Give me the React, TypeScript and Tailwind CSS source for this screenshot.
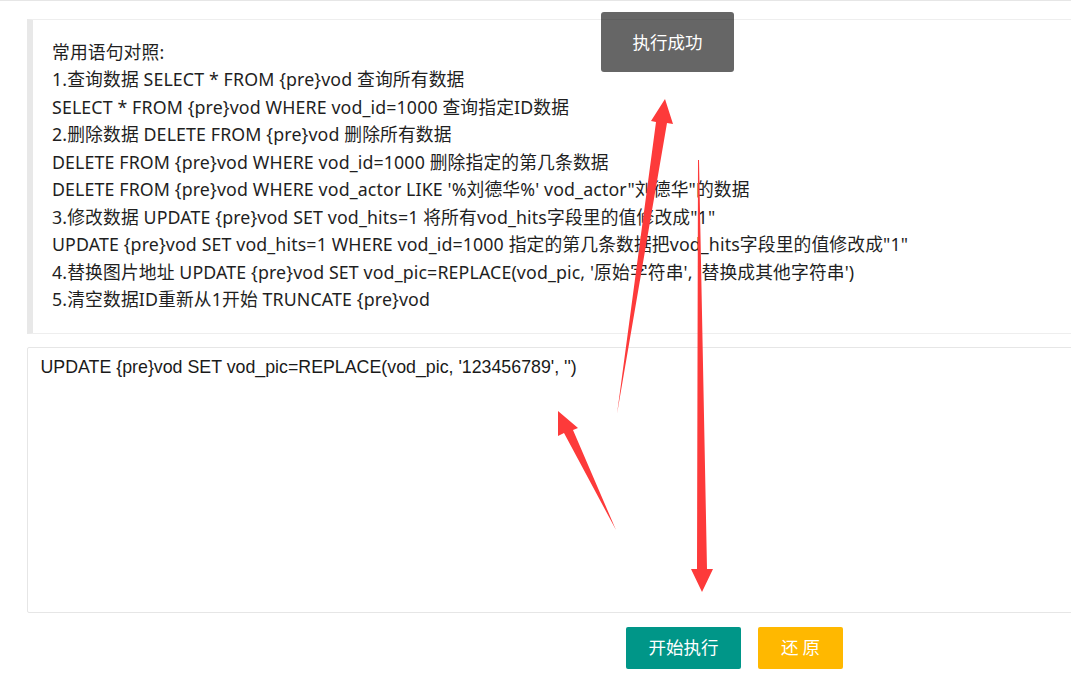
import React from "react";

const lines = [
  "常用语句对照:",
  "1.查询数据 SELECT * FROM {pre}vod 查询所有数据",
  "SELECT * FROM {pre}vod WHERE vod_id=1000 查询指定ID数据",
  "2.删除数据 DELETE FROM {pre}vod 删除所有数据",
  "DELETE FROM {pre}vod WHERE vod_id=1000 删除指定的第几条数据",
  "DELETE FROM {pre}vod WHERE vod_actor LIKE '%刘德华%' vod_actor\"刘德华\"的数据",
  "3.修改数据 UPDATE {pre}vod SET vod_hits=1 将所有vod_hits字段里的值修改成\"1\"",
  "UPDATE {pre}vod SET vod_hits=1 WHERE vod_id=1000 指定的第几条数据把vod_hits字段里的值修改成\"1\"",
  "4.替换图片地址 UPDATE {pre}vod SET vod_pic=REPLACE(vod_pic, '原始字符串', '替换成其他字符串')",
  "5.清空数据ID重新从1开始 TRUNCATE {pre}vod",
];

export default function App() {
  return (
    <div className="relative h-[675px] w-full overflow-hidden bg-white text-[#1f1f1f]">
      <div className="h-px w-full bg-[#e6e6e6]" />
      <div className="w-[1100px] pl-[27px] pt-[18px] font-['Noto_Sans','Noto_Sans_CJK_SC',sans-serif]">
        <div className="border border-[#eeeeee] border-l-[6px] border-l-[#e8e8e8] pt-[18.75px] pb-[18.75px] pl-[19px] text-[17.8px] leading-[27.5px] tracking-[0.12px]">
          {lines.map((l, i) => (
            <div key={i} className="whitespace-pre">
              {l}
            </div>
          ))}
        </div>
        <div className="mt-[13px] h-[266px] rounded-[2px] border border-[#e6e6e6] px-[12.5px] py-[7.5px] font-['Liberation_Sans','Noto_Sans_CJK_SC',sans-serif] text-[17.8px] leading-[25px] text-[#1a1a1a]">
          UPDATE {"{pre}"}vod SET vod_pic=REPLACE(vod_pic, '123456789', '')
        </div>
        <div className="mt-[14px] flex gap-[17px] pl-[599px] font-['Noto_Sans_CJK_SC',sans-serif]">
          <button className="flex h-[42px] w-[115px] items-center justify-center rounded-[2px] bg-[#009688] text-[17.5px] text-white">
            开始执行
          </button>
          <button className="flex h-[42px] w-[85px] items-center justify-center rounded-[2px] bg-[#FFB800] text-[17.5px] text-white">
            还 原
          </button>
        </div>
      </div>

      <div className="absolute left-[601px] top-[12px] flex h-[60px] w-[133px] items-center justify-center rounded-[3px] bg-[rgba(0,0,0,0.6)] font-['Noto_Sans_CJK_SC',sans-serif] text-[17.5px] text-white">
        执行成功
      </div>

      <svg
        className="pointer-events-none absolute left-0 top-0"
        width="1071"
        height="675"
        viewBox="0 0 1071 675"
      >
        <g fill="#fd3a3a">
          <polygon points="617,414 656,122 651,121 665,99 673,124 667,123" />
          <polygon points="698,160 699,160 707,569 713,569 702,592 691,569 697,569" />
          <polygon points="616,530 573,430 578,428 558,411 558,436 564,433" />
        </g>
      </svg>
    </div>
  );
}
